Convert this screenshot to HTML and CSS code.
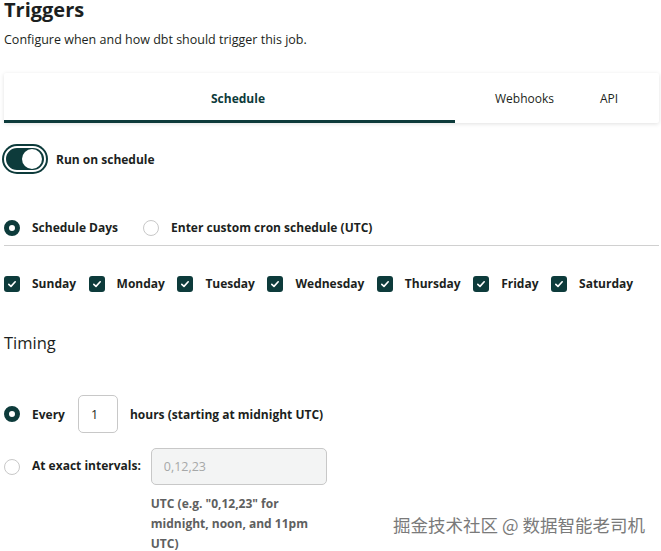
FILE: index.html
```html
<!DOCTYPE html>
<html lang="en">
<head>
    <meta charset="UTF-8">
    <title>Triggers</title>
    <link rel="stylesheet" href="styles.css">
</head>
<body>

    <!-- Header -->
    <h2 class="title">Triggers</h2>
    <p class="subtitle">Configure when and how dbt should trigger this job.</p>

    <!-- Tabs -->
    <div class="tabs">
        <div class="tab tab-active">Schedule</div>
        <div class="tab tab-first">Webhooks</div>
        <div class="tab">API</div>
    </div>

    <!-- Toggle -->
    <div class="toggle-row">
        <span class="toggle"><span class="knob"></span></span>
        <span class="label">Run on schedule</span>
    </div>

    <!-- Schedule mode -->
    <div class="radio-row">
        <span class="radio radio-on"></span>
        <span class="label">Schedule Days</span>
        <span class="radio"></span>
        <span class="label">Enter custom cron schedule (UTC)</span>
    </div>

    <hr class="divider">

    <!-- Days -->
    <div class="days">
        <span class="check"><svg viewBox="0 0 16 16" width="16" height="16"><path d="M4.8 8.3l2.2 2.1 4.2-4.6" fill="none" stroke="white" stroke-width="1.6" stroke-linecap="round" stroke-linejoin="round"/></svg></span><span class="label">Sunday</span>
        <span class="check"><svg viewBox="0 0 16 16" width="16" height="16"><path d="M4.8 8.3l2.2 2.1 4.2-4.6" fill="none" stroke="white" stroke-width="1.6" stroke-linecap="round" stroke-linejoin="round"/></svg></span><span class="label">Monday</span>
        <span class="check"><svg viewBox="0 0 16 16" width="16" height="16"><path d="M4.8 8.3l2.2 2.1 4.2-4.6" fill="none" stroke="white" stroke-width="1.6" stroke-linecap="round" stroke-linejoin="round"/></svg></span><span class="label">Tuesday</span>
        <span class="check"><svg viewBox="0 0 16 16" width="16" height="16"><path d="M4.8 8.3l2.2 2.1 4.2-4.6" fill="none" stroke="white" stroke-width="1.6" stroke-linecap="round" stroke-linejoin="round"/></svg></span><span class="label">Wednesday</span>
        <span class="check"><svg viewBox="0 0 16 16" width="16" height="16"><path d="M4.8 8.3l2.2 2.1 4.2-4.6" fill="none" stroke="white" stroke-width="1.6" stroke-linecap="round" stroke-linejoin="round"/></svg></span><span class="label">Thursday</span>
        <span class="check"><svg viewBox="0 0 16 16" width="16" height="16"><path d="M4.8 8.3l2.2 2.1 4.2-4.6" fill="none" stroke="white" stroke-width="1.6" stroke-linecap="round" stroke-linejoin="round"/></svg></span><span class="label">Friday</span>
        <span class="check"><svg viewBox="0 0 16 16" width="16" height="16"><path d="M4.8 8.3l2.2 2.1 4.2-4.6" fill="none" stroke="white" stroke-width="1.6" stroke-linecap="round" stroke-linejoin="round"/></svg></span><span class="label">Saturday</span>
    </div>

    <!-- Timing -->
    <h3 class="section">Timing</h3>

    <div class="timing-row">
        <span class="radio radio-on"></span>
        <span class="label">Every</span>
        <input class="hours" type="text" value="1">
        <span class="label">hours (starting at midnight UTC)</span>
    </div>

    <div class="timing-row exact">
        <span class="radio"></span>
        <span class="label">At exact intervals:</span>
        <div class="exact-field">
            <input class="intervals" type="text" placeholder="0,12,23" disabled>
            <p class="help">UTC (e.g. "0,12,23" for midnight, noon, and 11pm UTC)</p>
        </div>
    </div>

    <div class="watermark">掘金技术社区 @ 数据智能老司机</div>
</body>
</html>
```

FILE: styles.css
```css
body {
    font-family: "Open Sans", Arial, sans-serif;
    color: #1c1f21;
    margin: 0;
    padding: 0 2px 0 4px;
    background: white;
    font-size: 13px;
    height: 551px;
    overflow: hidden;
    position: relative;
}

.title {
    font-size: 20px;
    font-weight: bold;
    margin: 0;
    line-height: 20px;
}

.subtitle {
    margin: 11px 0 0 0;
    font-size: 12.5px;
    line-height: 18px;
}

/* Tabs */
.tabs {
    display: flex;
    margin-top: 24px;
    height: 50px;
    padding-right: 14px;
    box-shadow: 0 1px 4px rgba(0, 0, 0, 0.12);
    border-radius: 2px;
}

.tab {
    display: flex;
    align-items: center;
    justify-content: center;
    padding: 0 23px;
    font-size: 12px;
    box-sizing: border-box;
}

.tab-first {
    margin-left: 17px;
}

.tab-active {
    width: 451px;
    padding-left: 40px;
    color: #0d3b3b;
    font-weight: bold;
    border-bottom: 3px solid #0d3b3b;
    padding-top: 3px;
}

/* Toggle */
.toggle-row {
    display: flex;
    align-items: center;
    margin: 23px 0 0 -2px;
    gap: 10px;
}

.toggle {
    width: 42px;
    height: 26px;
    border-radius: 15px;
    background: #0d3b3b;
    border: 2px solid white;
    box-shadow: 0 0 0 2px #0d3b3b;
    display: flex;
    justify-content: flex-end;
    align-items: center;
    padding: 0 2px;
    box-sizing: border-box;
    margin-left: 2px;
}

.knob {
    width: 20px;
    height: 20px;
    border-radius: 50%;
    background: white;
}

.label {
    font-weight: bold;
    font-size: 12px;
}

/* Radios */
.radio-row {
    display: flex;
    align-items: center;
    margin-top: 47px;
}

.radio {
    width: 16px;
    height: 16px;
    border-radius: 50%;
    border: 1px solid #c8c8c8;
    box-sizing: border-box;
    margin-right: 12px;
    flex-shrink: 0;
}

.radio-on {
    border: 5px solid #0d3b3b;
}

.radio-row .label {
    margin-right: 25px;
}

.divider {
    border: none;
    border-top: 1px solid #d0d0d0;
    margin: 9px 0 0 0;
}

/* Days */
.days {
    display: flex;
    align-items: center;
    margin-top: 29px;
}

.check {
    width: 16px;
    height: 16px;
    border-radius: 3px;
    background: #0d3b3b;
    margin-right: 12px;
    display: flex;
}

.days .label {
    margin-right: 12.5px;
}

/* Timing */
.section {
    font-size: 16.5px;
    font-weight: normal;
    margin: 39px 0 0 0;
    line-height: 24px;
}

.timing-row {
    display: flex;
    align-items: center;
    margin-top: 40px;
}

.hours {
    width: 40px;
    height: 38px;
    box-sizing: border-box;
    border: 1px solid #c8c8c8;
    border-radius: 5px;
    margin: 0 12px 0 13px;
    padding: 0 12px;
    font-family: inherit;
    font-size: 12.5px;
    color: #1c1f21;
}

.exact {
    align-items: flex-start;
    margin-top: 15px;
}

.exact .radio {
    margin-top: 11px;
}

.exact .label {
    margin-top: 9px;
    margin-right: 10px;
}

.exact-field {
    width: 176px;
}

.intervals {
    width: 176px;
    height: 37px;
    box-sizing: border-box;
    border: 1px solid #c8c8c8;
    border-radius: 5px;
    background: #f3f4f4;
    padding: 0 12px;
    font-family: inherit;
    font-size: 12.5px;
}

.intervals::placeholder {
    color: #a6a8a8;
}

.help {
    margin: 9px 0 0 0;
    font-size: 12px;
    font-weight: bold;
    line-height: 20px;
    color: #5e6060;
}

.watermark {
    position: absolute;
    right: 16px;
    bottom: 14px;
    font-family: "Noto Sans CJK SC", sans-serif;
    font-size: 17.5px;
    color: #7a7a7a;
    text-shadow: 1px 1px 1px white;
}
```
